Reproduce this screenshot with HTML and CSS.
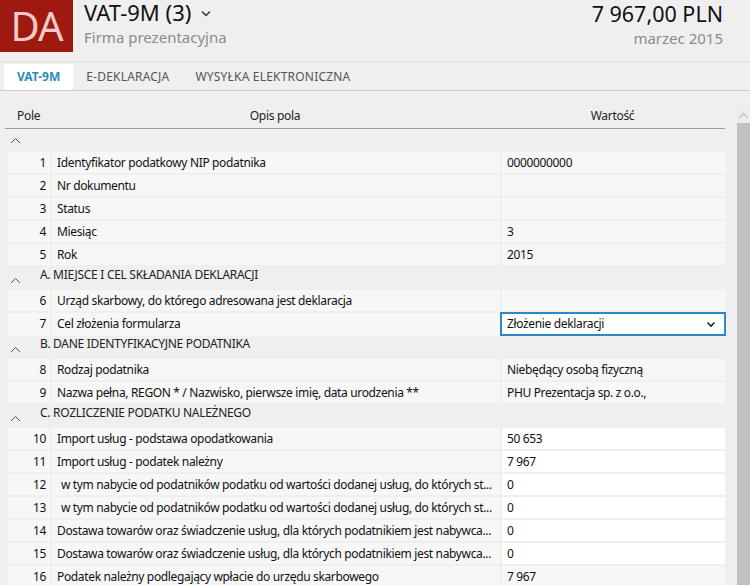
FILE: index.html
```html
<!DOCTYPE html>
<html lang="pl">
<head>
<meta charset="utf-8">
<title>VAT-9M</title>
<link rel="stylesheet" href="styles.css">
</head>
<body>
<header class="header">
  <div class="logo"><span>DA</span></div>
  <div class="title-block">
    <div class="title">VAT-9M (3)
      <svg class="title-chev" width="10" height="7" viewBox="0 0 10 7"><polyline points="1,1.5 5,5.5 9,1.5" fill="none" stroke="#333" stroke-width="1.5"/></svg>
    </div>
    <div class="subtitle">Firma prezentacyjna</div>
  </div>
  <div class="amount-block">
    <div class="amount">7 967,00 PLN</div>
    <div class="period">marzec 2015</div>
  </div>
</header>
<nav class="tabs">
  <div class="tab active">VAT-9M</div>
  <div class="tab">E-DEKLARACJA</div>
  <div class="tab">WYSYŁKA ELEKTRONICZNA</div>
</nav>
<main class="main">
  <div class="table">
    <div class="thead">
      <div class="th th-pole">Pole</div>
      <div class="th th-opis">Opis pola</div>
      <div class="th th-wart">Wartość</div>
    </div>
    <div class="tbody">
      <div class="section first">
        <svg class="sec-chev" width="11" height="7" viewBox="0 0 11 7"><polyline points="1,6 5.5,1.5 10,6" fill="none" stroke="#555" stroke-width="1"/></svg>
      </div>
      <div class="row"><div class="c num">1</div><div class="c desc">Identyfikator podatkowy NIP podatnika</div><div class="c val">0000000000</div></div>
      <div class="row"><div class="c num">2</div><div class="c desc">Nr dokumentu</div><div class="c val"></div></div>
      <div class="row"><div class="c num">3</div><div class="c desc">Status</div><div class="c val"></div></div>
      <div class="row"><div class="c num">4</div><div class="c desc">Miesiąc</div><div class="c val">3</div></div>
      <div class="row"><div class="c num">5</div><div class="c desc">Rok</div><div class="c val">2015</div></div>

      <div class="section">
        <svg class="sec-chev" width="11" height="7" viewBox="0 0 11 7"><polyline points="1,6 5.5,1.5 10,6" fill="none" stroke="#555" stroke-width="1"/></svg>
        <span class="sec-title">A. MIEJSCE I CEL SKŁADANIA DEKLARACJI</span>
      </div>
      <div class="row"><div class="c num">6</div><div class="c desc">Urząd skarbowy, do którego adresowana jest deklaracja</div><div class="c val"></div></div>
      <div class="row"><div class="c num">7</div><div class="c desc">Cel złożenia formularza</div><div class="c val sel-cell"><div class="select">Złożenie deklaracji<svg class="sel-chev" width="10" height="7" viewBox="0 0 10 7"><polyline points="1.5,1.5 5,5 8.5,1.5" fill="none" stroke="#222" stroke-width="1.6"/></svg></div></div></div>

      <div class="section">
        <svg class="sec-chev" width="11" height="7" viewBox="0 0 11 7"><polyline points="1,6 5.5,1.5 10,6" fill="none" stroke="#555" stroke-width="1"/></svg>
        <span class="sec-title">B. DANE IDENTYFIKACYJNE PODATNIKA</span>
      </div>
      <div class="row"><div class="c num">8</div><div class="c desc">Rodzaj podatnika</div><div class="c val">Niebędący osobą fizyczną</div></div>
      <div class="row"><div class="c num">9</div><div class="c desc">Nazwa pełna, REGON * / Nazwisko, pierwsze imię, data urodzenia **</div><div class="c val">PHU Prezentacja sp. z o.o.,</div></div>

      <div class="section">
        <svg class="sec-chev" width="11" height="7" viewBox="0 0 11 7"><polyline points="1,6 5.5,1.5 10,6" fill="none" stroke="#555" stroke-width="1"/></svg>
        <span class="sec-title">C. ROZLICZENIE PODATKU NALEŻNEGO</span>
      </div>
      <div class="row"><div class="c num">10</div><div class="c desc">Import usług - podstawa opodatkowania</div><div class="c val edit">50 653</div></div>
      <div class="row"><div class="c num">11</div><div class="c desc">Import usług - podatek należny</div><div class="c val edit">7 967</div></div>
      <div class="row"><div class="c num">12</div><div class="c desc indent">w tym nabycie od podatników podatku od wartości dodanej usług, do których st...</div><div class="c val edit">0</div></div>
      <div class="row"><div class="c num">13</div><div class="c desc indent">w tym nabycie od podatników podatku od wartości dodanej usług, do których st...</div><div class="c val edit">0</div></div>
      <div class="row"><div class="c num">14</div><div class="c desc">Dostawa towarów oraz świadczenie usług, dla których podatnikiem jest nabywca...</div><div class="c val edit">0</div></div>
      <div class="row"><div class="c num">15</div><div class="c desc">Dostawa towarów oraz świadczenie usług, dla których podatnikiem jest nabywca...</div><div class="c val edit">0</div></div>
      <div class="row"><div class="c num">16</div><div class="c desc">Podatek należny podlegający wpłacie do urzędu skarbowego</div><div class="c val">7 967</div></div>
    </div>
  </div>
  <div class="scrollbar">
    <div class="sb-arrow"><svg width="9" height="5" viewBox="0 0 9 5"><polyline points="0.5,4.5 4.5,0.8 8.5,4.5" fill="none" stroke="#999" stroke-width="1"/></svg></div>
    <div class="sb-thumb"></div>
  </div>
</main>
</body>
</html>
```
FILE: styles.css
```css
html, body {
  margin: 0;
  padding: 0;
}
body {
  width: 750px;
  height: 585px;
  overflow: hidden;
  background: #efefef;
  font-family: "Segoe UI", "Noto Sans", "Open Sans", sans-serif;
  color: #111;
}
.header {
  display: flex;
  height: 62px;
  border-bottom: 1px solid #dedede;
  box-sizing: border-box;
}
.logo {
  width: 73px;
  height: 52px;
  background: #9e1a10;
  color: #f4c9c6;
  font-size: 40px;
  display: flex;
  align-items: center;
  justify-content: center;
  letter-spacing: -1px;
  flex: none;
}
.logo span {
  line-height: 1;
}
.title-block {
  margin-left: 11px;
  flex: 1;
}
.title {
  font-size: 22px;
  line-height: 30px;
  margin-top: -3px;
  color: #111;
  display: flex;
  align-items: center;
}
.title-chev {
  margin-left: 10px;
  margin-top: 2px;
}
.subtitle {
  font-size: 15px;
  line-height: 20px;
  margin-top: 0px;
  color: #8c8c8c;
}
.amount-block {
  text-align: right;
  padding-right: 27px;
}
.amount {
  font-size: 21.5px;
  line-height: 30px;
  margin-top: -1px;
  color: #111;
}
.period {
  font-size: 15px;
  line-height: 20px;
  margin-top: -1px;
  color: #8c8c8c;
}
.tabs {
  display: flex;
  height: 29px;
  padding-left: 4px;
  padding-top: 2px;
  box-sizing: border-box;
  border-bottom: 1px solid #cdcdcd;
}
.tab {
  font-size: 12px;
  line-height: 26px;
  padding: 0 13px;
  letter-spacing: 0.2px;
  color: #555;
}
.tab.active {
  background: #fff;
  color: #2a8db5;
  font-weight: bold;
  letter-spacing: 0;
  padding: 0 13px;
}
.main {
  display: flex;
}
.table {
  width: 725px;
}
.thead {
  display: grid;
  grid-template-columns: 45px 450px 225px;
  margin-top: 15px;
  height: 22px;
  border-bottom: 1px solid #9b9b9b;
  margin-left: 5px;
  font-size: 12px;
  line-height: 20px;
  letter-spacing: -0.3px;
  color: #222;
}
.th-pole {
  padding-left: 12px;
}
.th-opis {
  text-align: center;
}
.th-wart {
  text-align: center;
}
.tbody {
  display: flex;
  flex-direction: column;
  gap: 2px;
}
.section {
  height: 21px;
  font-size: 12px;
  letter-spacing: -0.3px;
  color: #222;
  display: flex;
}
.sec-chev {
  margin-left: 10px;
  margin-top: 10px;
  flex: none;
}
.section.first .sec-chev {
  margin-top: 8px;
}
.sec-title {
  margin-left: 19px;
  line-height: 15px;
}
.row {
  display: grid;
  grid-template-columns: 42px 448px 223px;
  column-gap: 2px;
  margin-left: 8px;
  height: 21px;
  font-size: 12px;
  line-height: 22px;
  letter-spacing: -0.35px;
  color: #111;
}
.c {
  background: #f7f7f7;
  white-space: nowrap;
  overflow: hidden;
}
.num {
  text-align: right;
  padding-right: 4px;
}
.desc {
  padding-left: 5px;
}
.desc.indent {
  padding-left: 9px;
}
.val {
  padding-left: 5px;
}
.val.edit {
  background: #fff;
}
.sel-cell {
  overflow: visible;
  padding: 0;
  background: transparent;
}
.select {
  box-sizing: border-box;
  height: 24px;
  margin: -1px -1px 0 -2px;
  border: 2px solid #2f87c6;
  background: #fff;
  padding-left: 5px;
  padding-right: 8px;
  line-height: 20px;
  display: flex;
  justify-content: space-between;
  align-items: center;
}
.scrollbar {
  margin-left: 12px;
  width: 13px;
  margin-top: 16px;
  background: #e6e6e6;
  height: 478px;
  display: flex;
  flex-direction: column;
}
.sb-arrow {
  height: 16px;
  display: flex;
  justify-content: center;
  align-items: center;
  background: #ededed;
}
.sb-thumb {
  flex: 1;
  background: #c1c1c1;
}
```
